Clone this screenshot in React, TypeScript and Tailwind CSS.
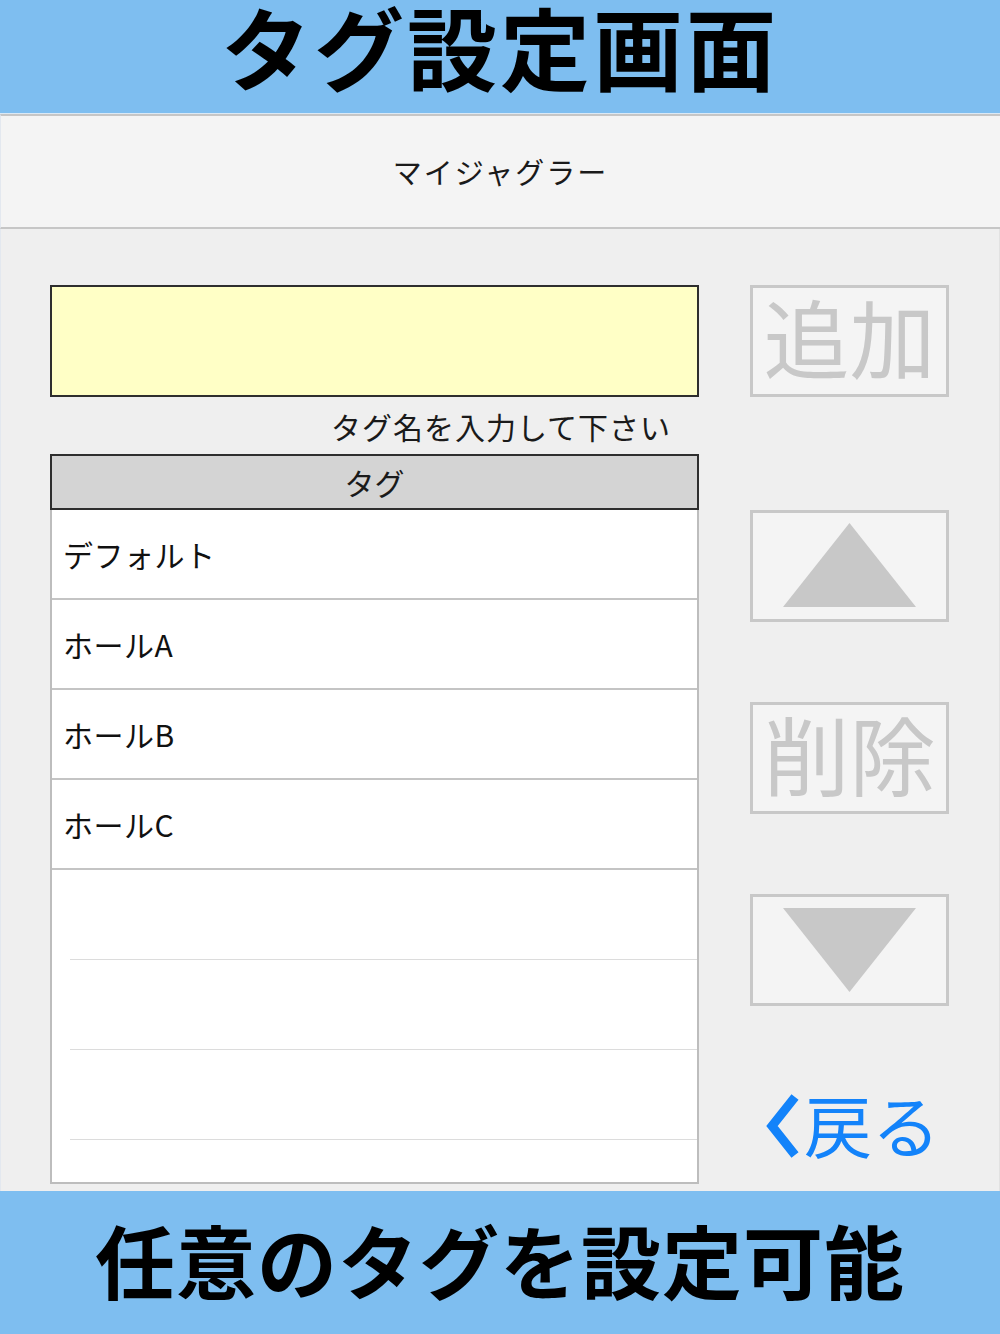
import React from "react";

const jp = "font-['Noto_Sans_CJK_JP','Noto_Sans',sans-serif]";

function GrayButton({ children }: { children: React.ReactNode }) {
  return (
    <div className="h-[112px] w-[199px] border-[3px] border-[#c8c8c8] bg-[#f4f4f4] flex items-center justify-center">
      {children}
    </div>
  );
}

export default function App() {
  const filled = ["デフォルト", "ホールA", "ホールB", "ホールC"];
  return (
    <div className={`w-[1000px] h-[1334px] flex flex-col bg-[#efefef] ${jp}`}>
      {/* top banner */}
      <div className="h-[113px] bg-[#7ebef0] flex items-start justify-center">
        <span className="block text-[90px] font-bold leading-[90px] text-black tracking-[3px]">
          タグ設定画面
        </span>
      </div>
      <div className="h-px bg-[#dbe9f5]" />
      {/* nav bar */}
      <div className="h-[115px] bg-[#f4f4f4] border-y-2 border-[#c6c6c6] border-l border-l-[#e3e8ef] flex items-center justify-center">
        <span className="text-[29px] text-[#1a1a1a] tracking-[2px]">マイジャグラー</span>
      </div>
      {/* body */}
      <div className="flex-1 flex border-l border-[#e3e8ef] border-r border-r-[#e2e2e2] pt-[56px] pl-[49px]">
        {/* left column */}
        <div className="w-[649px] flex flex-col">
          <div className="h-[112px] bg-[#ffffc6] border-2 border-[#2e2e2e]" />
          <div className="h-[57px] flex items-center justify-end pr-[28px]">
            <span className="text-[30px] text-[#1a1a1a] tracking-[1px] mt-[1px]">タグ名を入力して下さい</span>
          </div>
          <div className="h-[56px] bg-[#d4d4d4] border-2 border-[#2e2e2e] flex items-center justify-center">
            <span className="text-[30px] text-[#1a1a1a]">タグ</span>
          </div>
          <div className="h-[674px] bg-white border-x-2 border-b-2 border-[#bdbdbd] flex flex-col">
            {filled.map((t) => (
              <div key={t} className="h-[90px] border-b-2 border-[#c4c4c4] flex items-center pl-[11px]">
                <span className="text-[30px] text-[#111] tracking-[0.5px]">{t}</span>
              </div>
            ))}
            {[0, 1, 2].map((i) => (
              <div key={i} className="h-[90px] flex flex-col justify-end">
                <div className="ml-[18px] h-px bg-[#dcdcdc]" />
              </div>
            ))}
          </div>
        </div>
        {/* right column */}
        <div className="ml-[51px] flex flex-col">
          <GrayButton>
            <span className="text-[86px] leading-none text-[#c8c8c8] -mt-[10px]">追加</span>
          </GrayButton>
          <div className="mt-[113px]">
            <GrayButton>
              <svg width="133" height="84" viewBox="0 0 133 84" className="mt-[-2px]">
                <polygon points="66.5,0 133,84 0,84" fill="#c8c8c8" />
              </svg>
            </GrayButton>
          </div>
          <div className="mt-[80px]">
            <GrayButton>
              <span className="text-[86px] leading-none text-[#c8c8c8] -mt-[10px]">削除</span>
            </GrayButton>
          </div>
          <div className="mt-[80px]">
            <GrayButton>
              <svg width="133" height="84" viewBox="0 0 133 84" className="mt-[-1px]">
                <polygon points="0,0 133,0 66.5,84" fill="#c8c8c8" />
              </svg>
            </GrayButton>
          </div>
          <div className="mt-[88px] flex items-center pl-[14px]">
            <svg width="38" height="64" viewBox="0 0 38 64">
              <polyline points="31,3 8,32 31,61" fill="none" stroke="#1383fa" strokeWidth="9" strokeLinejoin="miter" />
            </svg>
            <span className="ml-[2px] text-[68px] leading-none text-[#1383fa] -mt-[4px]">戻る</span>
          </div>
        </div>
      </div>
      {/* bottom banner */}
      <div className="h-[143px] bg-[#7ebef0] flex items-center justify-center">
        <span className="text-[80px] font-bold leading-none text-black tracking-[1px] -mt-[10px]">
          任意のタグを設定可能
        </span>
      </div>
    </div>
  );
}
